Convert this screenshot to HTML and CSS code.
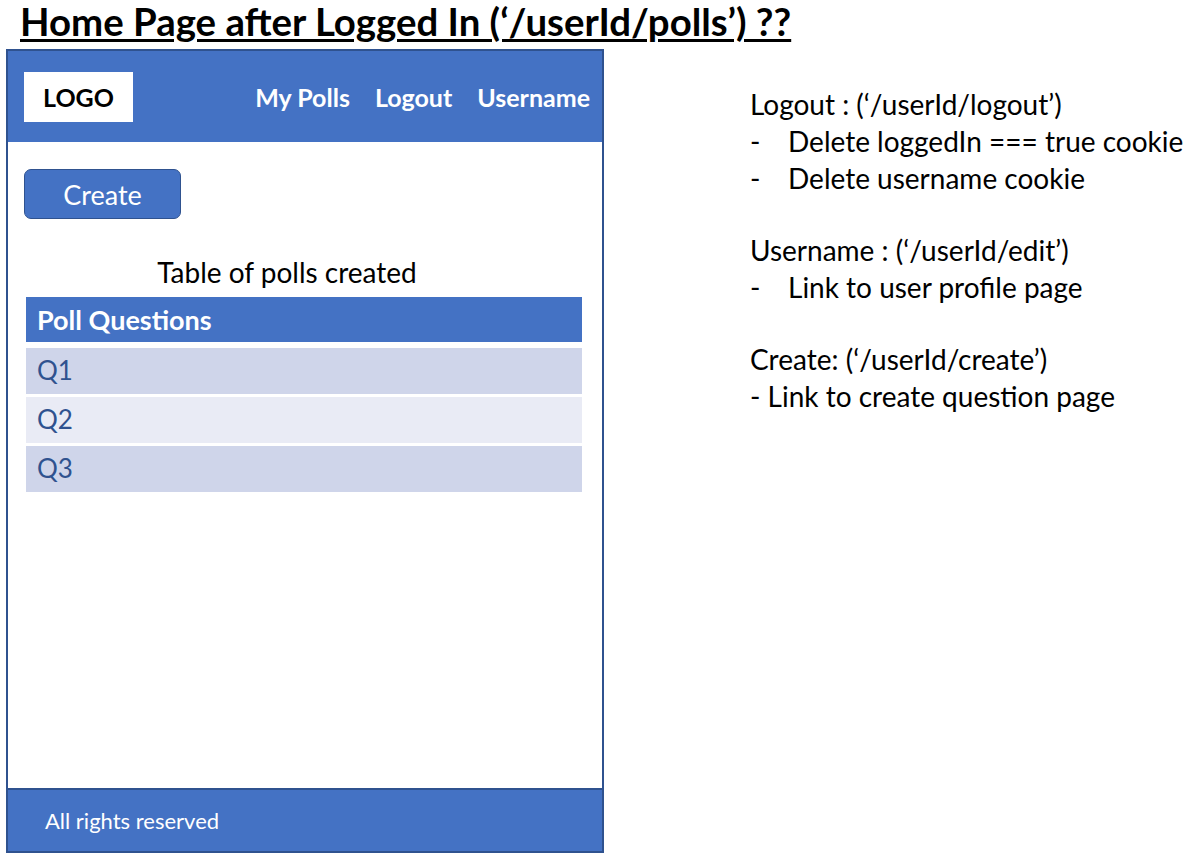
FILE: index.html
```html
<!DOCTYPE html>
<html>
<head>
<meta charset="utf-8">
<link rel="stylesheet" href="styles.css">
</head>
<body>
<h1 class="title">Home Page after Logged In (‘/userId/polls’) ??</h1>
<div class="main">
  <div class="frame">
    <header class="nav">
      <div class="logo">LOGO</div>
      <nav class="links">
        <span>My Polls</span>
        <span>Logout</span>
        <span>Username</span>
      </nav>
    </header>
    <section class="content">
      <div class="btn">Create</div>
      <div class="caption">Table of polls created</div>
      <div class="table">
        <div class="thead">Poll Questions</div>
        <div class="row odd">Q1</div>
        <div class="row even">Q2</div>
        <div class="row odd">Q3</div>
      </div>
    </section>
    <footer class="foot">All rights reserved</footer>
  </div>
  <div class="notes">
    <div class="line">Logout : (‘/userId/logout’)</div>
    <div class="line item"><span class="dash">-</span>Delete loggedIn === true cookie</div>
    <div class="line item"><span class="dash">-</span>Delete username cookie</div>
    <div class="gap"></div>
    <div class="line">Username : (‘/userId/edit’)</div>
    <div class="line item"><span class="dash">-</span>Link to user profile page</div>
    <div class="gap"></div>
    <div class="line">Create: (‘/userId/create’)</div>
    <div class="line">- Link to create question page</div>
  </div>
</div>
</body>
</html>
```
FILE: styles.css
```css
* { box-sizing: border-box; }
html, body { margin: 0; padding: 0; background: #fff; }
body {
  width: 1186px;
  height: 858px;
  overflow: hidden;
  font-family: Lato, "Open Sans", sans-serif;
  color: #000;
}
.title {
  margin: 0;
  height: 49px;
  padding: 0 0 0 20px;
  font-size: 38.4px;
  font-weight: 700;
  line-height: 42px;
  text-decoration: underline;
  text-decoration-thickness: 3px;
  text-underline-offset: 3px;
  white-space: nowrap;
}
.main { display: flex; }
.frame {
  margin-left: 6px;
  width: 598px;
  height: 804px;
  border: 2px solid #2F528F;
  display: flex;
  flex-direction: column;
}
.nav {
  background: #4472C4;
  height: 91px;
  display: flex;
  align-items: center;
  justify-content: space-between;
  padding: 0 12px 0 16px;
}
.logo {
  background: #fff;
  width: 109px;
  height: 50px;
  display: flex;
  align-items: center;
  justify-content: center;
  font-weight: 700;
  font-size: 25px;
  margin-top: 0;
}
.links {
  display: flex;
  gap: 25px;
  color: #fff;
  font-weight: 700;
  font-size: 25px;
}
.content {
  flex: 1;
  padding: 27px 20px 0 16px;
}
.btn {
  width: 157px;
  height: 50px;
  background: #4472C4;
  border: 1px solid #2F528F;
  border-radius: 7px;
  color: #fff;
  font-size: 27px;
  display: flex;
  align-items: center;
  justify-content: center;
}
.caption {
  margin-top: 36px;
  text-align: center;
  font-size: 28px;
  padding-right: 32px;
  line-height: 34px;
}
.table { margin-top: 8px; margin-left: 2px; }
.thead {
  background: #4472C4;
  color: #fff;
  font-weight: 700;
  font-size: 27px;
  height: 45px;
  line-height: 45px;
  padding-left: 11px;
  margin-bottom: 6px;
}
.row {
  height: 49px;
  line-height: 45px;
  font-size: 26px;
  color: #2F528F;
  padding-left: 11px;
  border-bottom: 3px solid #fff;
}
.odd { background: #CFD5EA; }
.even { background: #E9EBF5; }
.foot {
  background: #4472C4;
  border-top: 2px solid #2F528F;
  height: 63px;
  color: #fff;
  font-size: 22px;
  display: flex;
  align-items: center;
  padding-left: 37px;
}
.notes {
  margin-left: 146px;
  padding-top: 37px;
  font-size: 28px;
}
.line { height: 37px; line-height: 37px; white-space: nowrap; }
.item .dash { display: inline-block; width: 38px; }
.gap { height: 35px; }
```
